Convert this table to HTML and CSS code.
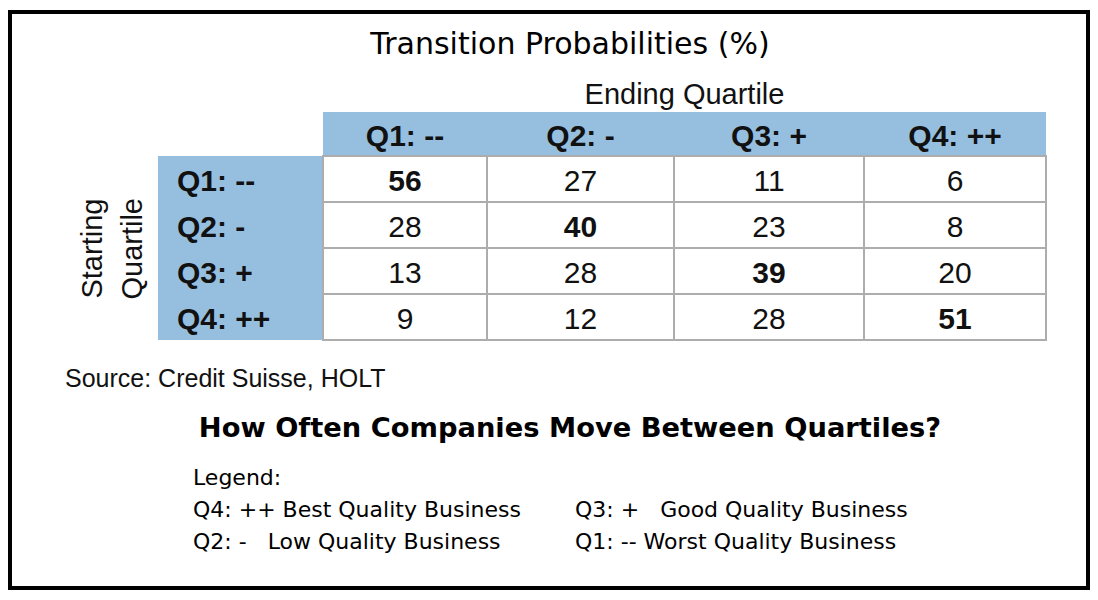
FILE: index.html
```html
<!DOCTYPE html>
<html>
<head>
<meta charset="utf-8">
<title>Transition Probabilities</title>
<link rel="stylesheet" href="styles.css">
</head>
<body>
<div class="frame">
  <h1 class="title">Transition Probabilities (%)</h1>
  <div class="matrix">
    <div class="side-label"><span>Starting<br>Quartile</span></div>
    <div class="table-wrap">
      <div class="ending">Ending Quartile</div>
      <table class="grid">
        <colgroup>
          <col class="c0"><col class="c1"><col class="c2"><col class="c3"><col class="c4">
        </colgroup>
        <thead>
          <tr>
            <th class="corner"></th>
            <th class="colhead">Q1: --</th>
            <th class="colhead">Q2: -</th>
            <th class="colhead">Q3: +</th>
            <th class="colhead">Q4: ++</th>
          </tr>
        </thead>
        <tbody>
          <tr><th class="rowhead">Q1: --</th><td class="diag">56</td><td>27</td><td>11</td><td>6</td></tr>
          <tr><th class="rowhead">Q2: -</th><td>28</td><td class="diag">40</td><td>23</td><td>8</td></tr>
          <tr><th class="rowhead">Q3: +</th><td>13</td><td>28</td><td class="diag">39</td><td>20</td></tr>
          <tr><th class="rowhead">Q4: ++</th><td>9</td><td>12</td><td>28</td><td class="diag">51</td></tr>
        </tbody>
      </table>
    </div>
  </div>
  <p class="source">Source: Credit Suisse, HOLT</p>
  <h2 class="question">How Often Companies Move Between Quartiles?</h2>
  <div class="legend">
    <div class="legend-head">Legend:</div>
    <div class="legend-grid">
      <span>Q4: ++ Best Quality Business</span>
      <span>Q3: +   Good Quality Business</span>
      <span>Q2: -   Low Quality Business</span>
      <span>Q1: -- Worst Quality Business</span>
    </div>
  </div>
</div>
</body>
</html>
```
FILE: styles.css
```css
html, body {
  margin: 0;
  padding: 0;
  background: #ffffff;
}

body {
  width: 1098px;
  height: 600px;
  overflow: hidden;
}

.frame {
  box-sizing: border-box;
  margin: 10px 0 0 8px;
  width: 1082px;
  height: 580px;
  border: 4px solid #000;
  background: #fff;
  color: #000;
}

.title {
  margin: 13px 0 0 42px;
  font-family: "DejaVu Sans", sans-serif;
  font-weight: normal;
  font-size: 30px;
  line-height: 34px;
  text-align: center;
}

.matrix {
  display: flex;
  align-items: flex-end;
}

.side-label {
  box-sizing: border-box;
  width: 146px;
  height: 184px;
  padding-right: 6px;
  display: flex;
  justify-content: flex-end;
  align-items: center;
}

.side-label span {
  writing-mode: vertical-rl;
  transform: rotate(180deg);
  font-family: "Liberation Sans", Arial, sans-serif;
  font-size: 29px;
  line-height: 40px;
  text-align: center;
  color: #111;
}

.table-wrap {
  display: flex;
  flex-direction: column;
}

.ending {
  margin: 16px 0 1px 165px;
  width: 723px;
  text-align: center;
  font-family: "Liberation Sans", Arial, sans-serif;
  font-size: 29px;
  line-height: 34px;
  color: #111;
}

.grid {
  border-collapse: collapse;
  table-layout: fixed;
  font-family: "Liberation Sans", Arial, sans-serif;
  color: #111;
}

.c0 { width: 165px; }
.c1 { width: 164px; }
.c2 { width: 187px; }
.c3 { width: 190px; }
.c4 { width: 182px; }

.grid thead tr { height: 44px; }
.grid tbody tr { height: 46px; }

.grid th, .grid td {
  padding: 4px 0 0 0;
  font-size: 30px;
  line-height: 36px;
}

.corner {
  background: #fff;
}

.colhead {
  background: #96bfdf;
  font-weight: bold;
  text-align: center;
  vertical-align: middle;
}

.grid th.rowhead {
  background: #96bfdf;
  font-weight: bold;
  text-align: left;
  padding-left: 19px;
}

.grid td {
  border: 2px solid #adadad;
  text-align: center;
  vertical-align: middle;
  background: #fff;
}

.grid td.diag {
  font-weight: bold;
}

.source {
  margin: 22px 0 0 53px;
  font-family: "Liberation Sans", Arial, sans-serif;
  font-size: 25px;
  line-height: 30px;
  color: #111;
}

.question {
  margin: 19px 0 0 42px;
  font-family: "DejaVu Sans", sans-serif;
  font-weight: bold;
  font-size: 27.3px;
  line-height: 32px;
  text-align: center;
}

.legend {
  margin: 18px 0 0 181px;
  font-family: "DejaVu Sans", sans-serif;
  font-size: 22px;
  line-height: 32px;
}

.legend-grid {
  display: grid;
  grid-template-columns: 382px auto;
}

.legend-grid span {
  white-space: pre;
}
```
